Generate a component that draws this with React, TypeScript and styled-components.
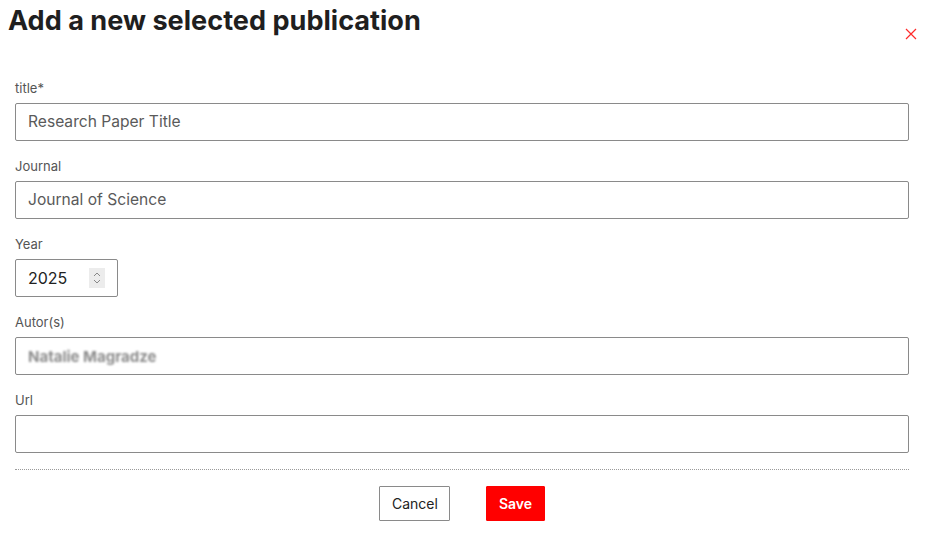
import React from "react";
import styled, { createGlobalStyle } from "styled-components";

const GlobalStyle = createGlobalStyle`
  body {
    margin: 0;
    background: #fff;
    font-family: Inter, "Liberation Sans", Arial, sans-serif;
    color: #222;
  }
`;

const Dialog = styled.div`
  width: 930px;
  box-sizing: border-box;
  padding: 5px 21px 0 15px;
`;

const Header = styled.div`
  display: flex;
  justify-content: space-between;
  align-items: flex-start;
  margin-left: -7px;
`;

const Title = styled.h1`
  margin: 0;
  font-size: 27.1px;
  font-weight: 700;
  line-height: 32px;
  color: #1f1f1f;
`;

const CloseButton = styled.button`
  margin: 21px -10px 0 0;
  padding: 0;
  border: none;
  background: none;
  width: 16px;
  height: 16px;
  display: flex;
  align-items: center;
  justify-content: center;
  cursor: pointer;
`;

const Form = styled.form`
  display: flex;
  flex-direction: column;
  margin-top: 37.5px;
`;

const Field = styled.div`
  display: flex;
  flex-direction: column;
  margin-bottom: 17.2px;
`;

const Label = styled.label`
  font-size: 13px;
  line-height: 16px;
  color: #555;
  margin-bottom: 7px;
`;

const Input = styled.input`
  box-sizing: border-box;
  width: 100%;
  height: 38px;
  border: 1px solid #8a8a8a;
  border-radius: 2px;
  padding: 0 12px;
  font-family: inherit;
  font-size: 15.6px;
  color: #5a5a5a;
  outline: none;
`;

const BlurBox = styled.div`
  box-sizing: border-box;
  height: 38px;
  border: 1px solid #8a8a8a;
  border-radius: 2px;
  padding: 0 12px;
  display: flex;
  align-items: center;
`;

const BlurText = styled.span`
  font-size: 15px;
  font-weight: 700;
  color: #8c8c8c;
  filter: blur(1.3px);
`;

const YearBox = styled.div`
  box-sizing: border-box;
  width: 103px;
  height: 38px;
  border: 1px solid #8a8a8a;
  border-radius: 2px;
  padding: 0 12px;
  display: flex;
  align-items: center;
  justify-content: space-between;
  font-size: 16px;
  color: #222;
`;

const Spinner = styled.span`
  width: 16px;
  height: 20px;
  background: #ececec;
  display: flex;
  align-items: center;
  justify-content: center;
`;

const Divider = styled.hr`
  border: none;
  border-top: 1px dotted #9a9a9a;
  margin: -1px 0 0;
`;

const Actions = styled.div`
  display: flex;
  justify-content: center;
  gap: 36px;
  margin-top: 16px;
`;

const Button = styled.button<{ $primary?: boolean }>`
  height: 35px;
  padding: 0 11.5px;
  border: 1px solid ${(p) => (p.$primary ? "#ff0000" : "#8a8a8a")};
  border-radius: 1px;
  background: ${(p) => (p.$primary ? "#ff0000" : "#fff")};
  color: ${(p) => (p.$primary ? "#fff" : "#222")};
  font-family: inherit;
  font-size: 14px;
  font-weight: ${(p) => (p.$primary ? 600 : 400)};
  cursor: pointer;
`;

const App: React.FC = () => {
  return (
    <>
      <GlobalStyle />
      <Dialog>
        <Header>
          <Title>Add a new selected publication</Title>
          <CloseButton aria-label="Close">
            <svg width="12" height="12" viewBox="0 0 12 12">
              <path d="M1 1 L11 11 M11 1 L1 11" stroke="#ff2a2a" strokeWidth="1.2" />
            </svg>
          </CloseButton>
        </Header>
        <Form onSubmit={(e) => e.preventDefault()}>
          <Field>
            <Label htmlFor="title">title*</Label>
            <Input id="title" defaultValue="Research Paper Title" />
          </Field>
          <Field>
            <Label htmlFor="journal">Journal</Label>
            <Input id="journal" defaultValue="Journal of Science" />
          </Field>
          <Field>
            <Label htmlFor="year">Year</Label>
            <YearBox id="year">
              <span>2025</span>
              <Spinner>
                <svg width="10" height="14" viewBox="0 0 10 14">
                  <path d="M2 5 L5 2 L8 5 M2 9 L5 12 L8 9" stroke="#888" strokeWidth="1" fill="none" />
                </svg>
              </Spinner>
            </YearBox>
          </Field>
          <Field>
            <Label htmlFor="authors">Autor(s)</Label>
            <BlurBox id="authors">
              <BlurText>Natalie Magradze</BlurText>
            </BlurBox>
          </Field>
          <Field>
            <Label htmlFor="url">Url</Label>
            <Input id="url" />
          </Field>
          <Divider />
          <Actions>
            <Button type="button">Cancel</Button>
            <Button type="submit" $primary>
              Save
            </Button>
          </Actions>
        </Form>
      </Dialog>
    </>
  );
};

export default App;
